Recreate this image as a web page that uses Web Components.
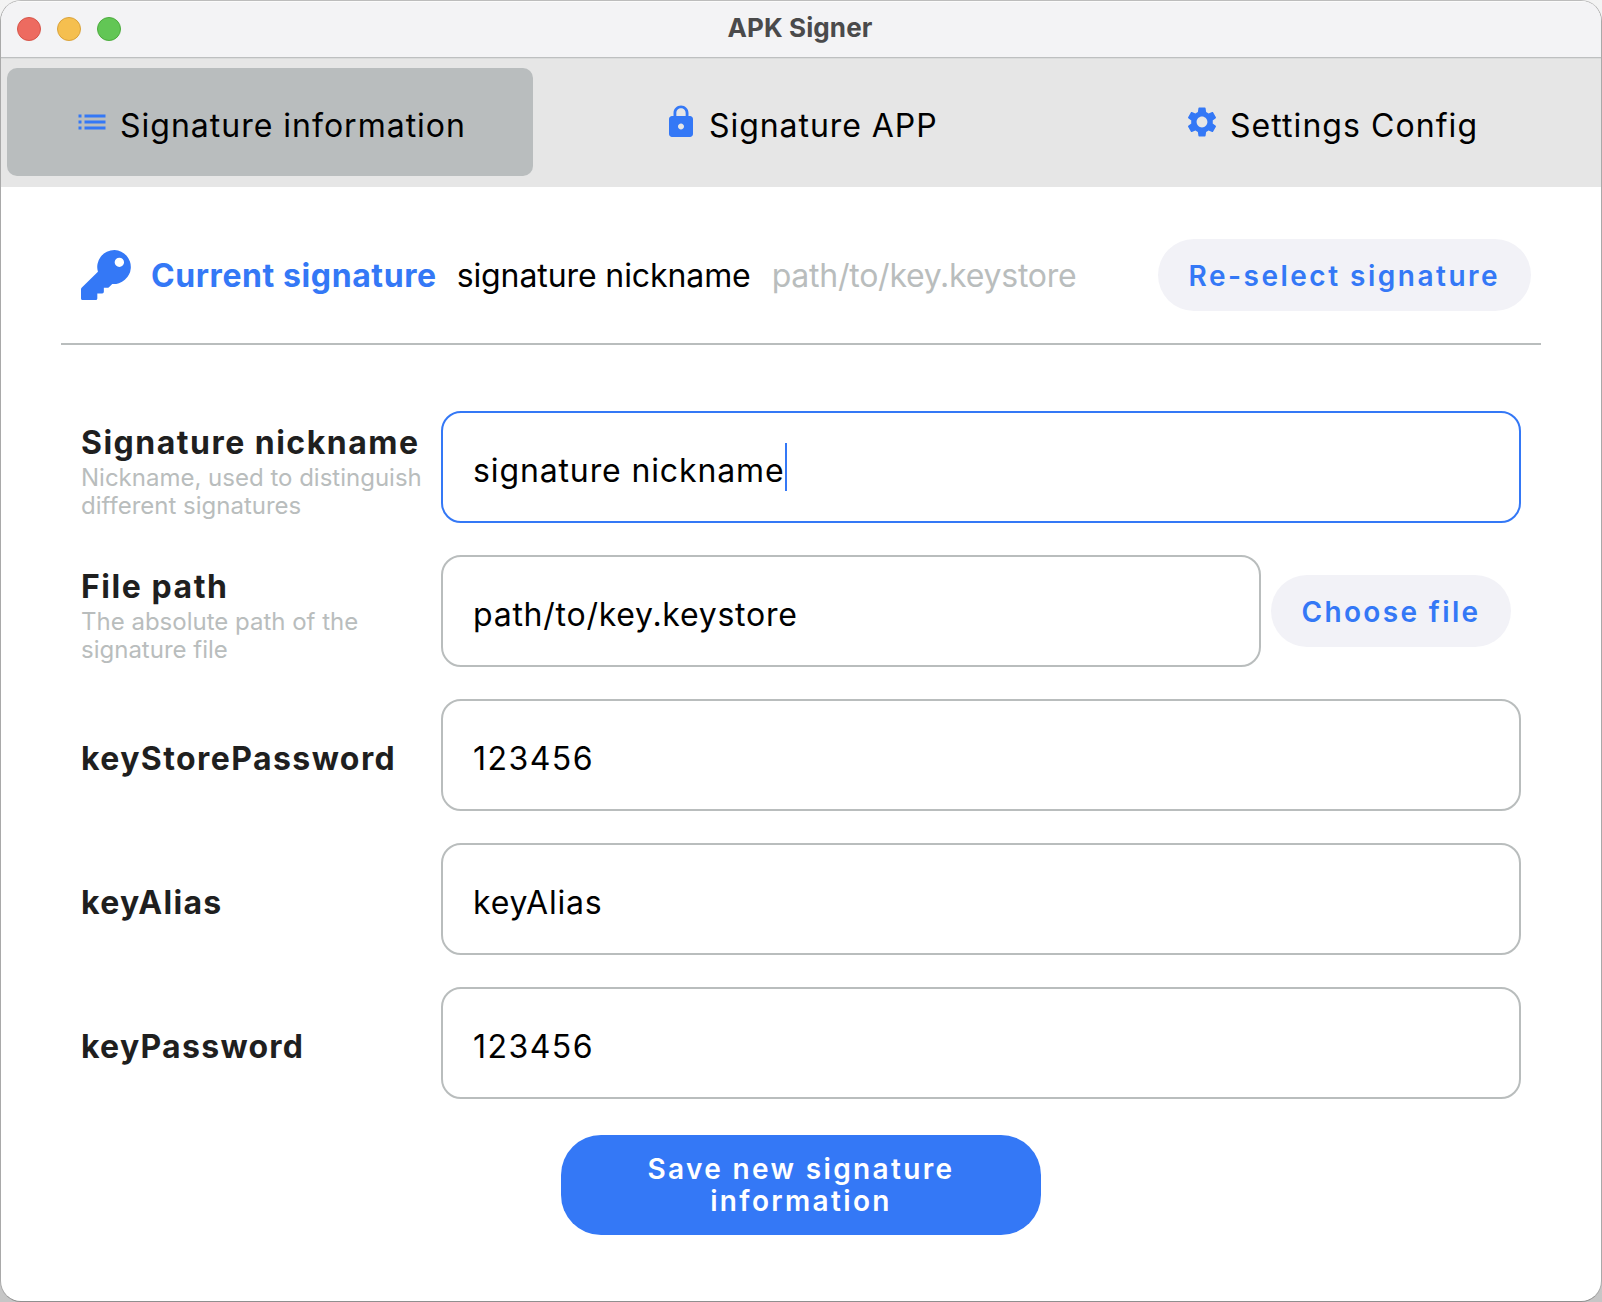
<!DOCTYPE html>
<html lang="en">
<head>
<meta charset="utf-8">
<title>APK Signer</title>
<style>
  html, body { margin: 0; height: 100%; }
  body {
    font-family: Inter, "Liberation Sans", sans-serif;
    background: linear-gradient(#f3f3f3, #c6c6c6);
    overflow: hidden;
    --blue: #3478f6;
    --grey: #b9bdbd;
    --soft: #f2f2f7;
  }
</style>
</head>
<body>
<app-window heading="APK Signer">
  <nav-tabs slot="nav">
    <nav-tab icon="list" inset="67" spacing="1" active>Signature information</nav-tab>
    <nav-tab icon="lock" inset="125" spacing="0.945">Signature APP</nav-tab>
    <nav-tab icon="gear" inset="115" spacing="1.06">Settings Config</nav-tab>
  </nav-tabs>
  <current-signature name="signature nickname" path="path/to/key.keystore"></current-signature>
  <signature-form>
    <form-row label="Signature nickname" spacing="1.49">
      <span slot="hint">Nickname, used to distinguish<br>different signatures</span>
      <text-box focused spacing="0.876">signature nickname</text-box>
    </form-row>
    <form-row label="File path" spacing="1.55">
      <span slot="hint">The absolute path of the<br>signature file</span>
      <text-box spacing="0.75">path/to/key.keystore</text-box>
      <pill-button spacing="2.35" style="width:240px;margin:0 10px">Choose file</pill-button>
    </form-row>
    <form-row label="keyStorePassword" spacing="1.42"><text-box spacing="1.476">123456</text-box></form-row>
    <form-row label="keyAlias" spacing="1.3"><text-box spacing="0.8">keyAlias</text-box></form-row>
    <form-row label="keyPassword" spacing="1.28"><text-box spacing="1.476">123456</text-box></form-row>
  </signature-form>
  <save-button>Save new signature<br>information</save-button>
</app-window>

<script>
const ICONS = {
  list: '<path d="M3 13h2v-2H3v2zm0 4h2v-2H3v2zm0-8h2V7H3v2zm4 4h14v-2H7v2zm0 4h14v-2H7v2zM7 7v2h14V7H7z"/>',
  lock: '<path d="M18 8h-1V6c0-2.76-2.24-5-5-5S7 3.24 7 6v2H6c-1.1 0-2 .9-2 2v10c0 1.1.9 2 2 2h12c1.1 0 2-.9 2-2V10c0-1.1-.9-2-2-2zm-6 9c-1.1 0-2-.9-2-2s.9-2 2-2 2 .9 2 2-.9 2-2 2zm3.1-9H8.9V6c0-1.71 1.39-3.1 3.1-3.1 1.71 0 3.1 1.39 3.1 3.1v2z"/>',
  gear: '<path d="M19.14 12.94c.04-.3.06-.61.06-.94 0-.32-.02-.64-.07-.94l2.03-1.58c.18-.14.23-.41.12-.61l-1.92-3.32c-.12-.22-.37-.29-.59-.22l-2.39.96c-.5-.38-1.03-.7-1.62-.94l-.36-2.54c-.04-.24-.24-.41-.48-.41h-3.84c-.24 0-.43.17-.47.41l-.36 2.54c-.59.24-1.13.57-1.62.94l-2.39-.96c-.22-.08-.47 0-.59.22L2.74 8.87c-.12.21-.08.47.12.61l2.03 1.58c-.05.3-.09.63-.09.94s.02.64.07.94l-2.03 1.58c-.18.14-.23.41-.12.61l1.92 3.32c.12.22.37.29.59.22l2.39-.96c.5.38 1.03.7 1.62.94l.36 2.54c.05.24.24.41.48.41h3.84c.24 0 .44-.17.47-.41l.36-2.54c.59-.24 1.13-.56 1.62-.94l2.39.96c.22.08.47 0 .59-.22l1.92-3.32c.12-.22.07-.47-.12-.61l-2.01-1.58zM12 15.6c-1.98 0-3.6-1.62-3.6-3.6s1.62-3.6 3.6-3.6 3.6 1.62 3.6 3.6-1.62 3.6-3.6 3.6z"/>'
};

class Base extends HTMLElement {
  connectedCallback() {
    if (!this.shadowRoot) this.attachShadow({ mode: 'open' }).innerHTML = this.view();
  }
  attr(name) { return this.getAttribute(name) || ''; }
  get spacing() { return (this.attr('spacing') || 0) + 'px'; }
}

customElements.define('app-window', class extends Base {
  view() { return `<style>
    :host { display: flex; flex-direction: column; box-sizing: border-box; width: 1602px; height: 1302px;
      border: 1px solid #a9a9a9; border-top-color: #bcbcbc; border-bottom-color: #8f8f8f; border-radius: 21px; overflow: hidden; background: #fff; }
    header { display: grid; grid-template-columns: 1fr auto 1fr; align-items: center; height: 56px; flex: none;
      background: #f3f3f5; border-bottom: 1px solid #bdbfc0; box-shadow: inset 0 1px #fbfbfb; }
    .lights { display: flex; gap: 16px; padding-left: 16px; }
    i { box-sizing: border-box; width: 24px; height: 24px; border-radius: 50%; border: 1px solid; }
    .r { background: #ed6b60; border-color: #d65549; }
    .y { background: #f5bf4f; border-color: #d9a23b; }
    .g { background: #62c655; border-color: #4cab3d; }
    h1 { margin: 0; font-size: 26px; font-weight: 700; line-height: 32px; padding: 0 2px 2px 0; letter-spacing: .1px; color: #4a4a4b; }
  </style><header><div class="lights"><i class="r"></i><i class="y"></i><i class="g"></i></div><h1>${this.attr('heading')}</h1></header>
  <slot name="nav"></slot><slot></slot>`; }
});

customElements.define('nav-tabs', class extends Base {
  view() { return `<style>
    :host { display: grid; grid-template-columns: repeat(3, 526px); gap: 5px; height: 129px; flex: none; box-sizing: border-box;
      padding: 10px 6px 11px; background: #e6e6e6; box-shadow: inset 0 1px #dadbdb; }
  </style><slot></slot>`; }
});

customElements.define('nav-tab', class extends Base {
  view() { return `<style>
    :host { display: flex; align-items: center; gap: 10px; box-sizing: border-box; padding-left: ${this.attr('inset')}px;
      border-radius: 10px; font-size: 32px; line-height: 40px; letter-spacing: ${this.spacing}; color: #000; white-space: nowrap; }
    :host([active]) { background: #b9bdbe; }
    svg { width: 36px; height: 36px; fill: var(--blue); flex: none; }
    span { padding-top: 7px; }
  </style><svg viewBox="0 0 24 24">${ICONS[this.attr('icon')]}</svg><span><slot></slot></span>`; }
});

customElements.define('pill-button', class extends Base {
  view() { return `<style>
    :host { display: flex; align-items: center; box-sizing: border-box; height: 72px; flex: none; padding: 1px 0 0 30.500px;
      border-radius: 36px; background: var(--soft); color: var(--blue); font-size: 28px; font-weight: 600; line-height: 34px;
      letter-spacing: ${this.spacing}; white-space: nowrap; }
  </style><span><slot></slot></span>`; }
});

customElements.define('current-signature', class extends Base {
  view() { return `<style>
    :host { display: flex; align-items: center; box-sizing: border-box; flex: none; margin: 0 60px; padding: 52px 10px 32px 20px;
      border-bottom: 2px solid var(--grey); font-size: 32px; line-height: 39px; white-space: nowrap; }
    svg { width: 51px; height: 50px; fill: var(--blue); margin-right: 19px; }
    b { font-weight: 700; letter-spacing: .588px; color: var(--blue); margin-right: 20px; }
    .name { letter-spacing: -.1px; margin-right: 21px; color: #000; }
    .path { letter-spacing: -.24px; color: var(--grey); }
    pill-button { width: 373px; margin-left: auto; }
  </style>
  <svg viewBox="0 0 50 50" preserveAspectRatio="none"><path fill-rule="evenodd" d="M33 0a17 17 0 1 1-2.4 34l-3.2 3.2q-.6.6-1.4.6h-3.6v4q0 1.600-1.600 1.600H16v5q0 1.600-1.600 1.600H1.600Q0 50 0 48.400V39.200q0-.8.6-1.400L16.600 21.800A17 17 0 0 1 33 0zM37.600 7.700a4.600 4.600 0 1 0 0 9.200a4.600 4.600 0 0 0 0-9.200z"/></svg>
  <b>Current signature</b><span class="name">${this.attr('name')}</span><span class="path">${this.attr('path')}</span>
  <pill-button spacing="2.500">Re-select signature</pill-button>`; }
});

customElements.define('signature-form', class extends Base {
  view() { return `<style>
    :host { display: flex; flex-direction: column; gap: 32px; flex: none; padding: 66px 80px 36px; }
  </style><slot></slot>`; }
});

customElements.define('form-row', class extends Base {
  view() {
    const top = this.querySelector('[slot=hint]') ? 12 : 40;
    return `<style>
    :host { display: flex; align-items: center; height: 112px; }
    .label { width: 360px; height: 112px; flex: none; box-sizing: border-box; padding-top: ${top}px; white-space: nowrap; }
    .label div { font-size: 32px; font-weight: 700; line-height: 40px; letter-spacing: ${this.spacing}; color: #1f1f1f; }
    ::slotted([slot=hint]) { display: block; padding-top: 1px; font-size: 24px; line-height: 28px; color: var(--grey); }
  </style><div class="label"><div>${this.attr('label')}</div><slot name="hint"></slot></div><slot></slot>`; }
});

customElements.define('text-box', class extends Base {
  view() { return `<style>
    :host { display: flex; align-items: flex-start; flex: 1; box-sizing: border-box; height: 112px; padding: 30px 0 0 30px;
      border: 2px solid var(--grey); border-radius: 20px; background: #fff; font-size: 32px; line-height: 40px;
      letter-spacing: ${this.spacing}; color: #000; white-space: nowrap; }
    :host([focused]) { border-color: var(--blue); }
    span { padding-top: 8px; }
    i { display: none; width: 2px; height: 48px; background: var(--blue); }
    :host([focused]) i { display: block; }
  </style><span><slot></slot></span><i></i>`; }
});

customElements.define('save-button', class extends Base {
  view() { return `<style>
    :host { display: block; align-self: center; box-sizing: border-box; width: 480px; height: 100px; flex: none; padding-top: 18px;
      border-radius: 40px; background: var(--blue); color: #fff; text-align: center; font-size: 28px; font-weight: 600;
      line-height: 32px; letter-spacing: 2.35px; }
  </style><slot></slot>`; }
});
</script>
</body>
</html>
